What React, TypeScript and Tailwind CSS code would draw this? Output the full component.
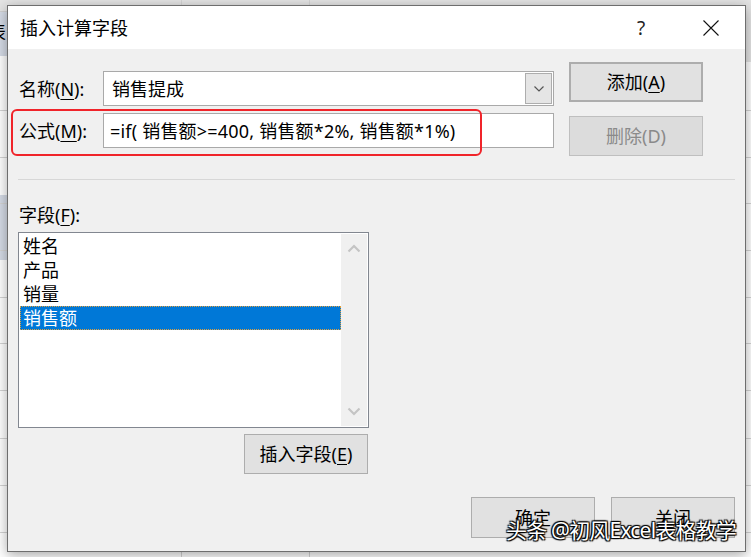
import React from "react"

const font = "font-['Noto_Sans','Noto_Sans_CJK_SC',sans-serif]"

const gridRows = [110, 157, 203, 250, 297, 343, 390, 438, 485, 532]

function U({ children }: { children: React.ReactNode }) {
  return <span className="underline underline-offset-[3px] decoration-1">{children}</span>
}

function Button({
  children,
  className = "",
  disabled,
}: {
  children: React.ReactNode
  className?: string
  disabled?: boolean
}) {
  const look = disabled
    ? "bg-[#dcdcdc] border border-[#bfbfbf] text-[#8a8a8a]"
    : "bg-[#e1e1e1] border border-[#adadad] text-black"
  return (
    <div
      className={`flex items-center justify-center text-[18px] leading-[24px] ${look} ${className}`}
    >
      {children}
    </div>
  )
}

function Chevron({ up }: { up?: boolean }) {
  return (
    <svg width="14" height="9" viewBox="0 0 14 9">
      <path
        d={up ? "M1.5 7.5 L7 2 L12.5 7.5" : "M1.5 1.5 L7 7 L12.5 1.5"}
        fill="none"
        stroke="#c4c4c4"
        strokeWidth="2.2"
      />
    </svg>
  )
}

export default function App() {
  return (
    <div className={`relative w-[751px] h-[557px] overflow-hidden bg-white ${font}`}>
      {/* sheet behind the dialog */}
      <div className="absolute left-0 top-0 w-full h-[12px] bg-[#e4e4e4] border-b border-[#d0d0d0]" />
      <div className="absolute right-0 top-0 w-[12px] h-[62px] bg-[#e4e4e4]" />
      <div className="absolute left-0 top-[12px] w-[12px] h-[44px] bg-[#d5dbe6] overflow-hidden">
        <span className="absolute left-[-12px] top-[8px] text-[18px] leading-[24px]">表</span>
      </div>
      <div className="absolute left-0 top-[195px] w-[12px] h-[65px] bg-[#d5dbe6]" />
      {gridRows.map((y) => (
        <div key={y} className="absolute left-0 w-full h-px bg-[#d4d4d4]" style={{ top: y }} />
      ))}
      <div className="absolute top-0 left-[181px] w-px h-full bg-[#d4d4d4]" />
      <div className="absolute top-0 left-[309px] w-px h-full bg-[#d4d4d4]" />

      {/* dialog */}
      <div className="absolute left-[7px] top-[5px] w-[739px] h-[547px] border border-[#6e6e6e] bg-[#f0f0f0] shadow-[0_3px_12px_rgba(0,0,0,0.35)] flex flex-col">
        {/* title bar */}
        <div className="h-[43px] bg-white flex items-center pl-[12px] pr-[11px] shrink-0">
          <span className="text-[18px] leading-[24px] text-black">插入计算字段</span>
          <div className="flex-1" />
          <div className="w-[46px] flex justify-center text-[19px] leading-[24px] text-[#222]">?</div>
          <div className="w-[24px]" />
          <div className="w-[46px] flex justify-center">
            <svg width="16" height="16" viewBox="0 0 16 16">
              <path d="M0.5 0.5 L15.5 15.5 M15.5 0.5 L0.5 15.5" stroke="#111" strokeWidth="1.1" />
            </svg>
          </div>
        </div>

        {/* top section */}
        <div className="relative h-[130px] flex shrink-0">
          <div className="pl-[11px] w-[546px] flex flex-col">
            <div className="mt-[22px] h-[35px] flex items-center">
              <span className="w-[84px] text-[18px] leading-[24px]">
                名称(<U>N</U>):
              </span>
              <div className="w-[451px] h-[35px] bg-white border border-[#a9a9a9] flex items-center pl-[8px] pr-[1px]">
                <span className="flex-1 text-[18px] leading-[24px]">销售提成</span>
                <div className="w-[27px] h-[31px] bg-[#e5e5e5] border border-[#adadad] flex items-center justify-center">
                  <svg width="10" height="6" viewBox="0 0 10 6">
                    <path d="M0.5 0.5 L5 5 L9.5 0.5" fill="none" stroke="#555" strokeWidth="1.2" />
                  </svg>
                </div>
              </div>
            </div>
            <div className="mt-[7px] h-[35px] flex items-center">
              <span className="w-[84px] text-[18px] leading-[24px]">
                公式(<U>M</U>):
              </span>
              <div className="w-[451px] h-[35px] bg-white border border-[#a9a9a9] flex items-center pl-[6px]">
                <span className="text-[18px] leading-[24px] whitespace-nowrap tracking-[0.2px]">
                  =if( 销售额&gt;=400, 销售额*2%, 销售额*1%)
                </span>
              </div>
            </div>
          </div>
          <div className="ml-[15px] flex flex-col">
            <Button className="mt-[13px] w-[134px] h-[40px] border-2 border-[#0078d7]">
              添加(<U>A</U>)
            </Button>
            <Button disabled className="mt-[14px] w-[134px] h-[40px]">
              删除(D)
            </Button>
          </div>
          {/* red annotation */}
          <div className="absolute left-[3px] top-[60px] w-[471px] h-[47px] border-2 border-[#f0242a] rounded-[6px]" />
        </div>

        <div className="ml-[10px] w-[717px] h-px bg-[#d7d7d7] shrink-0" />

        {/* fields */}
        <div className="ml-[10px] w-[351px] flex flex-col">
          <span className="mt-[23px] h-[24px] pl-px text-[18px] leading-[24px]">
            字段(<U>F</U>):
          </span>
          <div className="mt-[5px] h-[196px] bg-white border border-[#828790] p-px flex">
            <div className="flex-1 flex flex-col">
              {["姓名", "产品", "销量"].map((f) => (
                <div key={f} className="h-[24px] pl-[3px] text-[18px] leading-[24px] text-black">
                  {f}
                </div>
              ))}
              <div className="h-[24px] pl-[2px] text-[18px] leading-[22px] text-white bg-[#0078d7] border border-dotted border-[#e0a040]">
                销售额
              </div>
            </div>
            <div className="w-[26px] bg-[#f0f0f0] flex flex-col items-center justify-between py-[10px]">
              <Chevron up />
              <Chevron />
            </div>
          </div>
          <Button className="self-end mr-px mt-[6px] w-[124px] h-[40px]">
            插入字段(<U>E</U>)
          </Button>
        </div>

        <div className="mt-[23px] mr-[10px] flex justify-end gap-[16px]">
          <Button className="w-[124px] h-[41px]">确定</Button>
          <Button className="w-[124px] h-[41px]">关闭</Button>
        </div>
      </div>

      {/* watermark */}
      <div className="absolute left-[506px] top-[517px] text-[21px] leading-[26px] tracking-[-0.8px] text-white whitespace-nowrap [text-shadow:0_0_1px_#000,1px_1px_1px_#000,-1px_-1px_1px_#000,1px_-1px_1px_#000,-1px_1px_1px_#000]">
        头条 @初风Excel表格教学
      </div>
    </div>
  )
}
